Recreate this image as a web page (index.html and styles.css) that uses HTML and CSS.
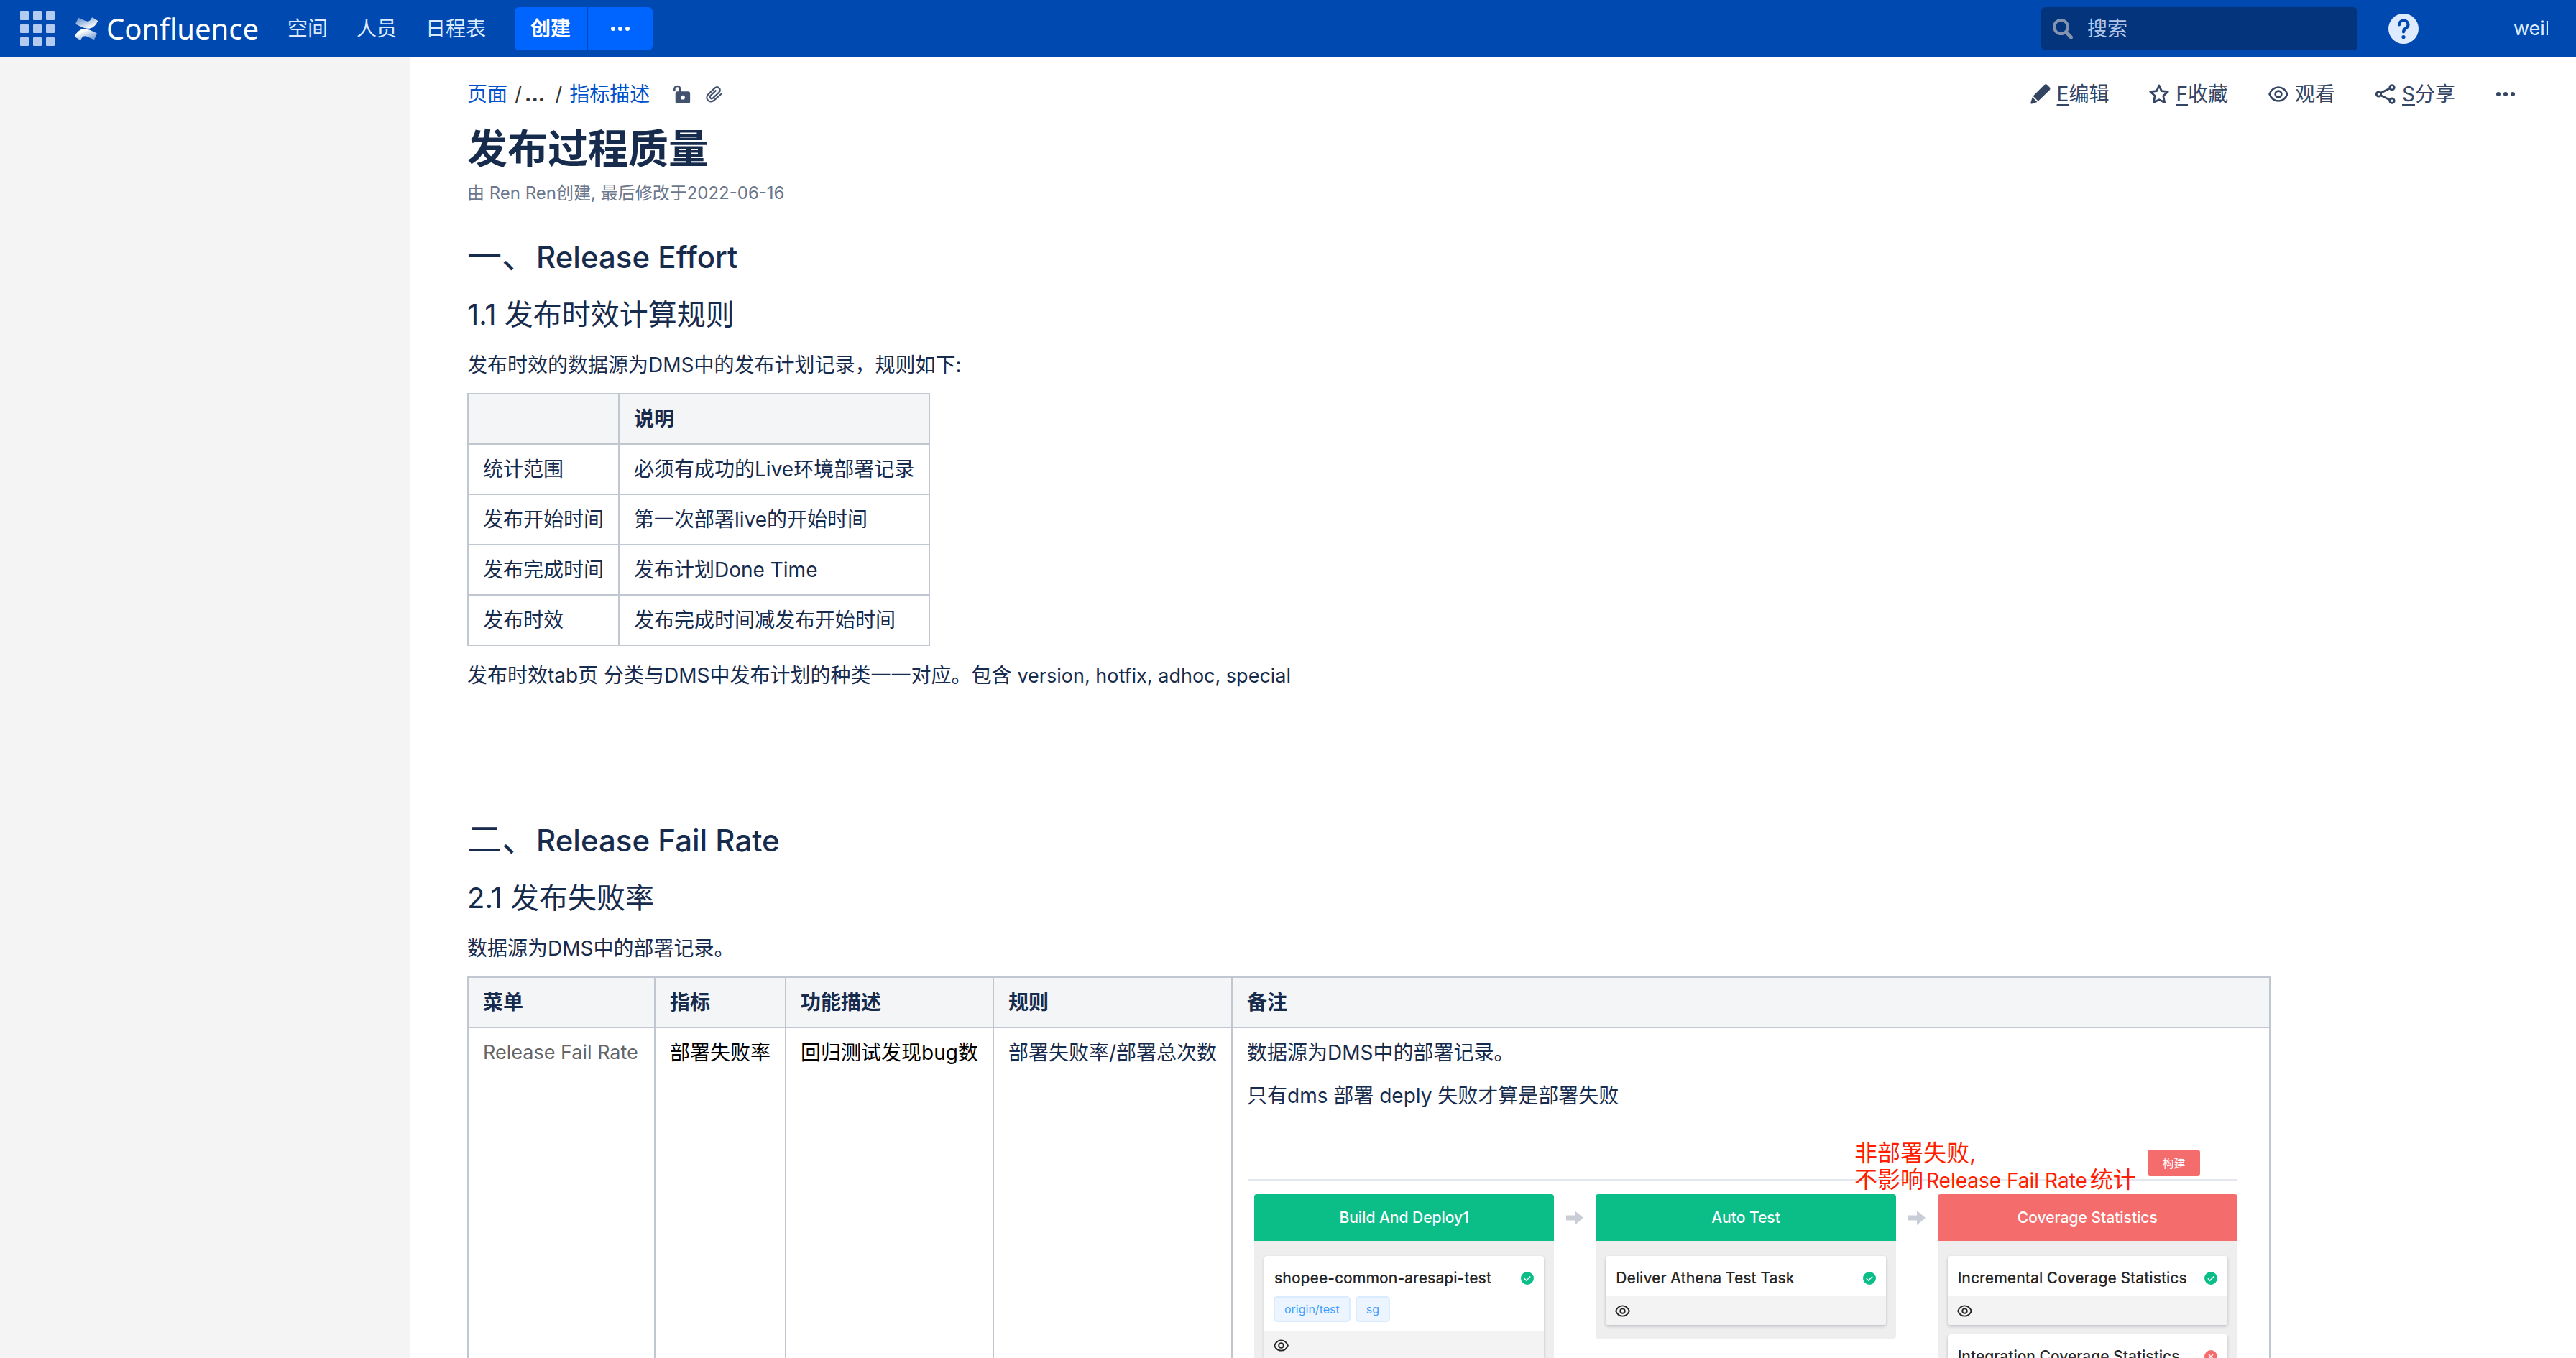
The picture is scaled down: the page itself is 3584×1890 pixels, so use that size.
FILE: index.html
```html
<!DOCTYPE html>
<html lang="zh-CN">
<head>
<meta charset="utf-8">
<title>发布过程质量 - Confluence</title>
<link rel="stylesheet" href="styles.css">
</head>
<body>
<svg class="sprite" aria-hidden="true">
  <symbol id="eye" viewBox="0 0 28 28"><path d="M1.500 14C4 8 9 4.500 14 4.500S24 8 26.500 14C24 20 19 23.500 14 23.500S4 20 1.500 14z" fill="none" stroke="currentColor" stroke-width="2.600" stroke-linejoin="round"/><circle cx="14" cy="14" r="4.400" fill="none" stroke="currentColor" stroke-width="2.600"/></symbol>
  <symbol id="dots" viewBox="0 0 28 28"><circle cx="4" cy="14" r="3"/><circle cx="14" cy="14" r="3"/><circle cx="24" cy="14" r="3"/></symbol>
  <symbol id="ok" viewBox="0 0 18 18"><circle cx="9" cy="9" r="9" fill="#0bbd87"/><path d="M4.800 9.300l3 2.900 5.400-5.800" fill="none" stroke="#fff" stroke-width="1.500"/></symbol>
  <symbol id="bad" viewBox="0 0 18 18"><circle cx="9" cy="9" r="9" fill="#f56c6c"/><path d="M6 6l6 6M12 6l-6 6" fill="none" stroke="#fff" stroke-width="1.500"/></symbol>
  <symbol id="arrow" viewBox="0 0 24 20"><path d="M0 6.500h12V0l12 10-12 10v-6.500H0z" fill="#c9ced6"/></symbol>
</svg>

<header class="topbar">
  <button class="switcher" aria-label="应用">
    <svg viewBox="0 0 48 48" fill="#b3cbf0"><rect width="12" height="12" rx="1"/><rect x="18" width="12" height="12" rx="1"/><rect x="36" width="12" height="12" rx="1"/><rect y="18" width="12" height="12" rx="1"/><rect x="18" y="18" width="12" height="12" rx="1"/><rect x="36" y="18" width="12" height="12" rx="1"/><rect y="36" width="12" height="12" rx="1"/><rect x="18" y="36" width="12" height="12" rx="1"/><rect x="36" y="36" width="12" height="12" rx="1"/></svg>
  </button>
  <a class="logo" href="#">
    <svg viewBox="0 0 24 24">
      <defs>
        <linearGradient id="g1" x1="1" y1="1" x2="0.200" y2="0"><stop offset="0.200" stop-color="#fff"/><stop offset="1" stop-color="#fff" stop-opacity="0.400"/></linearGradient>
        <linearGradient id="g2" x1="0" y1="0" x2="0.900" y2="1"><stop offset="0.300" stop-color="#fff"/><stop offset="1" stop-color="#fff" stop-opacity="0.400"/></linearGradient>
      </defs>
      <path fill="url(#g2)" d="M.87 18.257c-.248.382-.53.875-.763 1.245a.764.764 0 0 0 .255 1.040l4.965 3.054a.764.764 0 0 0 1.058-.26c.199-.332.454-.763.733-1.221 1.967-3.247 3.945-2.853 7.508-1.146l4.957 2.337a.764.764 0 0 0 1.028-.382l2.364-5.346a.764.764 0 0 0-.382-1 599.851 599.851 0 0 1-4.965-2.361C10.911 10.970 5.224 11.185.87 18.257z"/>
      <path fill="url(#g1)" d="M23.131 5.743c.249-.405.531-.875.764-1.250a.764.764 0 0 0-.256-1.034L18.675.404a.764.764 0 0 0-1.058.26c-.195.335-.451.763-.734 1.225-1.966 3.246-3.945 2.850-7.508 1.146L4.437.694a.764.764 0 0 0-1.027.382L1.046 6.422a.764.764 0 0 0 .382 1c1.039.49 3.105 1.467 4.965 2.361 6.698 3.246 12.392 3.029 16.738-4.040z"/>
    </svg>
    <span>Confluence</span>
  </a>
  <nav class="mainnav">
    <a href="#">空间</a>
    <a href="#">人员</a>
    <a href="#">日程表</a>
  </nav>
  <div class="create">
    <button class="create-main">创建</button>
    <button class="create-more" aria-label="更多"><svg viewBox="0 0 28 28" fill="#fff"><use href="#dots"/></svg></button>
  </div>
  <form class="search">
    <svg viewBox="0 0 28 28" fill="none" stroke="#8594ae"><circle cx="11.500" cy="11.500" r="9.500" stroke-width="4"/><path d="M19 19l6.500 7" stroke-width="5" stroke-linecap="round"/></svg>
    <input type="text" placeholder="搜索" aria-label="搜索">
  </form>
  <button class="help" aria-label="帮助">
    <svg viewBox="0 0 42 42"><circle cx="21" cy="21" r="21" fill="#deebff"/><path d="M15 15.500c0-8 12.500-8 12.500 0 0 5-6.500 4.500-6.500 10" fill="none" stroke="#0049b0" stroke-width="4.200" stroke-linecap="round"/><circle cx="21" cy="32.500" r="2.600" fill="#0049b0"/></svg>
  </button>
  <button class="user">weil</button>
</header>

<div class="workspace">
  <aside class="sidebar"></aside>
  <main class="content">
    <div class="page-bar">
      <nav class="crumbs">
        <a href="#">页面</a>
        <span class="slash">/<b>...</b></span>
        <span class="slash">/</span>
        <a href="#">指标描述</a>
        <a class="crumb-icon lock" href="#" aria-label="限制"><svg viewBox="0 0 28 28" fill="#42526e"><path d="M2.500 8.500V6.500a4.300 4.300 0 0 1 8.600 0V11" fill="none" stroke="#42526e" stroke-width="2.800" stroke-linecap="round"/><path fill-rule="evenodd" d="M7 10h16a3 3 0 0 1 3 3v12a3 3 0 0 1-3 3H7a3 3 0 0 1-3-3V13a3 3 0 0 1 3-3zm8 5.800a3.200 3.200 0 1 0 0 6.400 3.200 3.200 0 0 0 0-6.400z"/></svg></a>
        <a class="crumb-icon clip" href="#" aria-label="附件"><svg viewBox="0 0 28 28" fill="none" stroke="#42526e" stroke-width="2.400" stroke-linecap="round" stroke-linejoin="round"><path d="M25 14L14.500 23.300c-6.500 5.500-14.500-2.300-9-8.800L15.500 5c4.800-4 10.500 1.800 6.200 6.600l-8.700 8.200c-2.900 2.400-6.200-1-3.700-3.700l7.700-7.300"/></svg></a>
      </nav>
      <div class="actions">
        <button><svg viewBox="0 0 28 28" fill="#344563"><path d="M17 3.200l2.200-2.100c1.500-1.400 3-1.200 4.300.1l3 3.100c1.300 1.400 1.300 2.900 0 4.200l-2.100 2.100L10.800 23.800 3.600 16.700zM2.600 18.200l6.800 6.800L2 27.400c-1.200.3-1.900-.4-1.600-1.500z"/></svg><span><u>E</u>编辑</span></button>
        <button><svg viewBox="0 0 28 28" fill="none" stroke="#344563" stroke-width="2.800" stroke-linejoin="round"><path d="M14 2l3.400 7.600 8.800 1-6.400 6 1.800 9L14 21.700l-7.600 3.900 1.800-9-6.400-6 8.800-1z"/></svg><span><u>F</u>收藏</span></button>
        <button><svg viewBox="0 0 28 28"><use href="#eye"/></svg><span>观看</span></button>
        <button><svg viewBox="0 0 28 28" fill="none" stroke="#344563" stroke-width="2.800"><path d="M7 12.500L20 6M7 15.500L20 22"/><circle cx="4.500" cy="14" r="3.200"/><circle cx="23" cy="4.800" r="3.200"/><circle cx="23" cy="23.200" r="3.200"/></svg><span><u>S</u>分享</span></button>
        <button aria-label="更多"><svg viewBox="0 0 28 28" fill="#344563"><use href="#dots"/></svg></button>
      </div>
    </div>

    <h1 class="title">发布过程质量</h1>
    <p class="meta">由 Ren Ren创建, 最后修改于2022-06-16</p>

    <section class="section">
      <h2>一、<span class="latin">Release Effort</span></h2>
      <h3>1.1 发布时效计算规则</h3>
      <p>发布时效的数据源为DMS中的发布计划记录，规则如下:</p>
      <table class="grid rules">
        <thead><tr><th class="w-key"></th><th class="w-desc">说明</th></tr></thead>
        <tbody>
          <tr><td>统计范围</td><td>必须有成功的Live环境部署记录</td></tr>
          <tr><td>发布开始时间</td><td>第一次部署live的开始时间</td></tr>
          <tr><td>发布完成时间</td><td>发布计划Done Time</td></tr>
          <tr><td>发布时效</td><td>发布完成时间减发布开始时间</td></tr>
        </tbody>
      </table>
      <p>发布时效tab页 分类与DMS中发布计划的种类一一对应。包含 <span class="terms">version, hotfix, adhoc, special</span></p>
    </section>

    <section class="section spaced">
      <h2>二、<span class="latin">Release Fail Rate</span></h2>
      <h3>2.1 发布失败率</h3>
      <p>数据源为DMS中的部署记录。</p>
      <table class="grid rates">
        <thead><tr><th class="w-menu">菜单</th><th class="w-metric">指标</th><th class="w-func">功能描述</th><th class="w-rule">规则</th><th>备注</th></tr></thead>
        <tbody>
          <tr>
            <td class="muted">Release Fail Rate</td>
            <td class="black">部署失败率</td>
            <td class="black">回归测试发现bug数</td>
            <td>部署失败率/部署总次数</td>
            <td>
              <p>数据源为DMS中的部署记录。</p>
              <p>只有dms 部署 deply 失败才算是部署失败</p>
              <div class="board">
                <div class="board-bar"><button class="build">构建</button></div>
                <p class="note">非部署失败,<br>不影响<span class="note-latin">Release Fail Rate</span>统计</p>
                <div class="stages">
                  <div class="stage">
                    <h4>Build And Deploy1</h4>
                    <article class="card">
                      <div class="card-head"><span>shopee-common-aresapi-test</span><svg viewBox="0 0 18 18"><use href="#ok"/></svg></div>
                      <div class="tags"><span>origin/test</span><span>sg</span></div>
                      <div class="card-foot"><svg viewBox="0 0 28 28"><use href="#eye"/></svg></div>
                    </article>
                  </div>
                  <div class="arrow"><svg viewBox="0 0 24 20"><use href="#arrow"/></svg></div>
                  <div class="stage">
                    <h4>Auto Test</h4>
                    <article class="card">
                      <div class="card-head"><span>Deliver Athena Test Task</span><svg viewBox="0 0 18 18"><use href="#ok"/></svg></div>
                      <div class="card-foot"><svg viewBox="0 0 28 28"><use href="#eye"/></svg></div>
                    </article>
                  </div>
                  <div class="arrow"><svg viewBox="0 0 24 20"><use href="#arrow"/></svg></div>
                  <div class="stage failed">
                    <h4>Coverage Statistics</h4>
                    <article class="card">
                      <div class="card-head"><span>Incremental Coverage Statistics</span><svg viewBox="0 0 18 18"><use href="#ok"/></svg></div>
                      <div class="card-foot"><svg viewBox="0 0 28 28"><use href="#eye"/></svg></div>
                    </article>
                    <article class="card">
                      <div class="card-head"><span>Integration Coverage Statistics</span><svg viewBox="0 0 18 18"><use href="#bad"/></svg></div>
                      <div class="card-foot"><svg viewBox="0 0 28 28"><use href="#eye"/></svg></div>
                    </article>
                  </div>
                </div>
              </div>
            </td>
          </tr>
        </tbody>
      </table>
    </section>
  </main>
</div>
</body>
</html>
```
FILE: styles.css
```css
* { box-sizing: border-box; }

body {
  margin: 0;
  height: 100vh;
  display: flex;
  flex-direction: column;
  overflow: hidden;
  background: #fff;
  color: #172b4d;
  font: 28px/40px Inter, "Noto Sans CJK SC", sans-serif;
}

h1, h2, h3, h4, p { margin: 0; font-weight: 400; }
a { color: #0052cc; text-decoration: none; }
button { border: 0; padding: 0; background: none; color: inherit; font: inherit; }
svg { display: block; flex: none; }
.sprite { position: absolute; width: 0; height: 0; }

/* Top bar */
.topbar {
  flex: none;
  display: flex;
  align-items: center;
  height: 80px;
  padding: 0 39px 0 28px;
  background: #0049b0;
  color: #deebff;
}
.switcher svg { width: 48px; height: 48px; }
.logo {
  display: flex;
  align-items: center;
  gap: 12px;
  margin-left: 28px;
  color: #fff;
  font: 40px/56px "Noto Sans", sans-serif;
}
.logo svg { width: 32px; height: 32px; }
.mainnav { display: flex; gap: 40px; margin: 0 40px; }
.mainnav a { color: #deebff; }
.create { display: flex; gap: 2px; height: 60px; color: #fff; font-weight: 600; }
.create button { background: #0065ff; }
.create-main { width: 100px; border-radius: 6px 0 0 6px; }
.create-more { display: grid; place-items: center; width: 90px; border-radius: 0 6px 6px 0; }
.create-more svg { width: 28px; height: 28px; }
.search {
  display: flex;
  align-items: center;
  gap: 20px;
  width: 440px;
  height: 60px;
  margin-left: auto;
  padding: 0 16px;
  border-radius: 6px;
  background: #04347c;
}
.search svg { width: 28px; height: 28px; }
.search input { flex: 1; min-width: 0; padding: 0; border: 0; background: none; color: #deebff; font: inherit; }
.search input::placeholder { color: #b3c7ea; opacity: 1; }
.help { margin-left: 43px; }
.help svg { width: 42px; height: 42px; }
.user { width: 48px; margin-left: 132px; overflow: hidden; text-align: left; font-size: 27px; }

/* Page frame */
.workspace { flex: 1; min-height: 0; display: flex; }
.sidebar { flex: none; width: 570px; background: #f4f4f4; }
.content { flex: 1; min-width: 0; padding: 31px 84px 40px 80px; overflow: auto; scrollbar-width: none; }

.page-bar { display: flex; justify-content: space-between; }
.crumbs { display: flex; gap: 10px; }
.slash { color: #333; }
.slash b { margin: 0 4px; }
.crumb-icon { align-self: center; }
.crumb-icon svg { width: 26px; height: 26px; }
.lock { margin-left: 22px; }
.clip { margin-left: 8px; }
.actions { display: flex; gap: 56px; color: #344563; }
.actions button { display: flex; align-items: center; gap: 9px; }
.actions svg { width: 28px; height: 28px; }
.actions u { text-decoration-thickness: 2px; text-underline-offset: 4px; }

.title { margin-top: 24px; font-size: 56px; line-height: 64px; font-weight: 600; }
.meta { margin-top: 14px; color: #6b778c; font-size: 24px; line-height: 32px; }

/* Article */
.section { margin-top: 43px; }
.section.spaced { margin-top: 180px; }
.section h2 { font-size: 48px; line-height: 56px; }
.latin { font-size: 42px; line-height: 42px; font-weight: 500; }
.section h3 { margin-top: 30px; font-size: 40px; line-height: 48px; }
.section h3 + p { margin-top: 26px; }
.terms { font-size: 27px; line-height: 27px; }

.grid { margin: 19px 0 21px; border-collapse: collapse; white-space: nowrap; }
.grid th, .grid td {
  padding: 14px 20px;
  border: 2px solid #c1c7d0;
  text-align: left;
  vertical-align: top;
}
.grid th { background: #f4f5f7; font-weight: 600; }
.w-key { width: 210px; }
.w-desc { width: 430px; }
.w-menu { width: 260px; }
.w-metric { width: 182px; }
.w-func { width: 286px; }
.w-rule { width: 328px; }
.grid p + p { margin-top: 20px; }
.grid .muted { color: #666; font-size: 27px; }
.grid .black { color: #000; }

/* Pipeline board */
.board {
  position: relative;
  width: 1376px;
  margin: 20px 24px 0 2px;
  padding-top: 35px;
  color: #262626;
  font-size: 21px;
  line-height: 30px;
}
.board-bar { display: flex; justify-content: flex-end; padding: 0 52px 4px; border-bottom: 3px solid #e4e7ed; }
.build { width: 73px; height: 37px; border-radius: 4px; background: #f56c6c; color: #fff; font-size: 16px; line-height: 24px; }
.note {
  position: absolute;
  left: 843px;
  top: 21px;
  color: #ff1e00;
  font-size: 32px;
  line-height: 37px;
}
.note-latin { margin: 0 4px; font-size: 28px; }
.stages { display: flex; align-items: flex-start; padding: 18px 0 0 8px; }
.arrow { display: grid; place-items: center; width: 58px; height: 65px; }
.arrow svg { width: 24px; height: 20px; }
.stage { flex: 1; padding-bottom: 19px; border-radius: 4px; background: #eee; }
.stage h4 {
  margin-bottom: 21px;
  border-radius: 4px 4px 0 0;
  background: #0bbd87;
  color: #fff;
  font-size: 21px;
  font-weight: 500;
  line-height: 65px;
  text-align: center;
}
.stage.failed h4 { background: #f56c6c; }
.card {
  margin: 0 14px;
  overflow: hidden;
  border-radius: 4px;
  background: #fff;
  box-shadow: 0 2px 4px rgba(0, 0, 40, 0.2);
}
.card + .card { margin-top: 13px; }
.card-head { display: flex; align-items: center; justify-content: space-between; padding: 16px 14px 10px; font-weight: 500; }
.card-head svg { width: 18px; height: 18px; }
.tags { display: flex; gap: 7px; padding: 0 13px 12px; }
.tags span {
  padding: 0 13px;
  border: 2px solid #d9ecff;
  border-radius: 5px;
  background: #ecf5ff;
  color: #409eff;
  font-size: 16px;
  line-height: 32px;
}
.card-foot { display: flex; align-items: center; height: 40px; padding: 0 13px; background: #f3f3f3; }
.card-foot svg { width: 21px; height: 21px; }
```
